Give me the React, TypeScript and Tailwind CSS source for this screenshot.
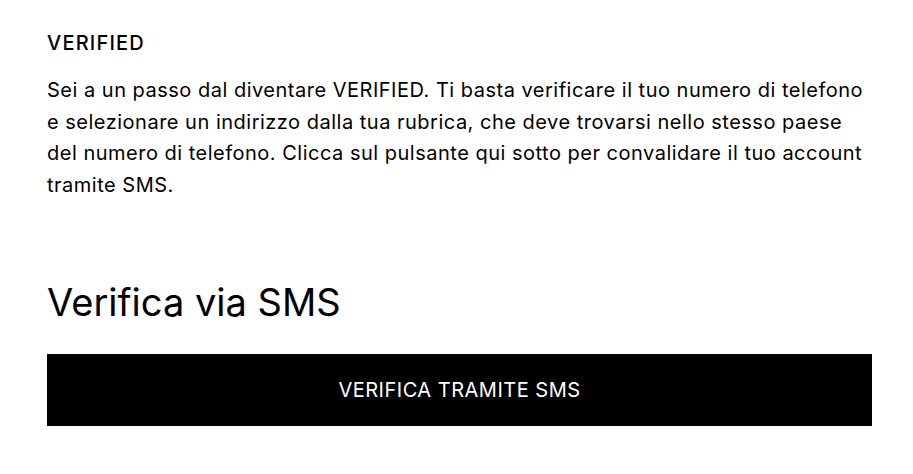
export default function App() {
  return (
    <div className="w-[913px] h-[474px] bg-white text-black" style={{ fontFamily: "Inter, 'Noto Sans', sans-serif" }}>
      <div className="pl-[47px] w-[872px] pt-[29px]">
        <div className="text-[20px] leading-[28px] font-medium tracking-[0.06em]">VERIFIED</div>
        <p className="mt-[18px] text-[20px] leading-[31.7px] tracking-[0.025em]">
          Sei a un passo dal diventare VERIFIED. Ti basta verificare il tuo numero di telefono e selezionare un indirizzo dalla tua rubrica, che deve trovarsi nello stesso paese del numero di telefono. Clicca sul pulsante qui sotto per convalidare il tuo account tramite SMS.
        </p>
        <h2 className="mt-[76px] text-[38px] leading-[48px]">Verifica via SMS</h2>
        <button className="mt-[28px] w-full h-[72px] bg-black text-white text-[20px] tracking-[0.025em] flex items-center justify-center">
          VERIFICA TRAMITE SMS
        </button>
      </div>
    </div>
  );
}
